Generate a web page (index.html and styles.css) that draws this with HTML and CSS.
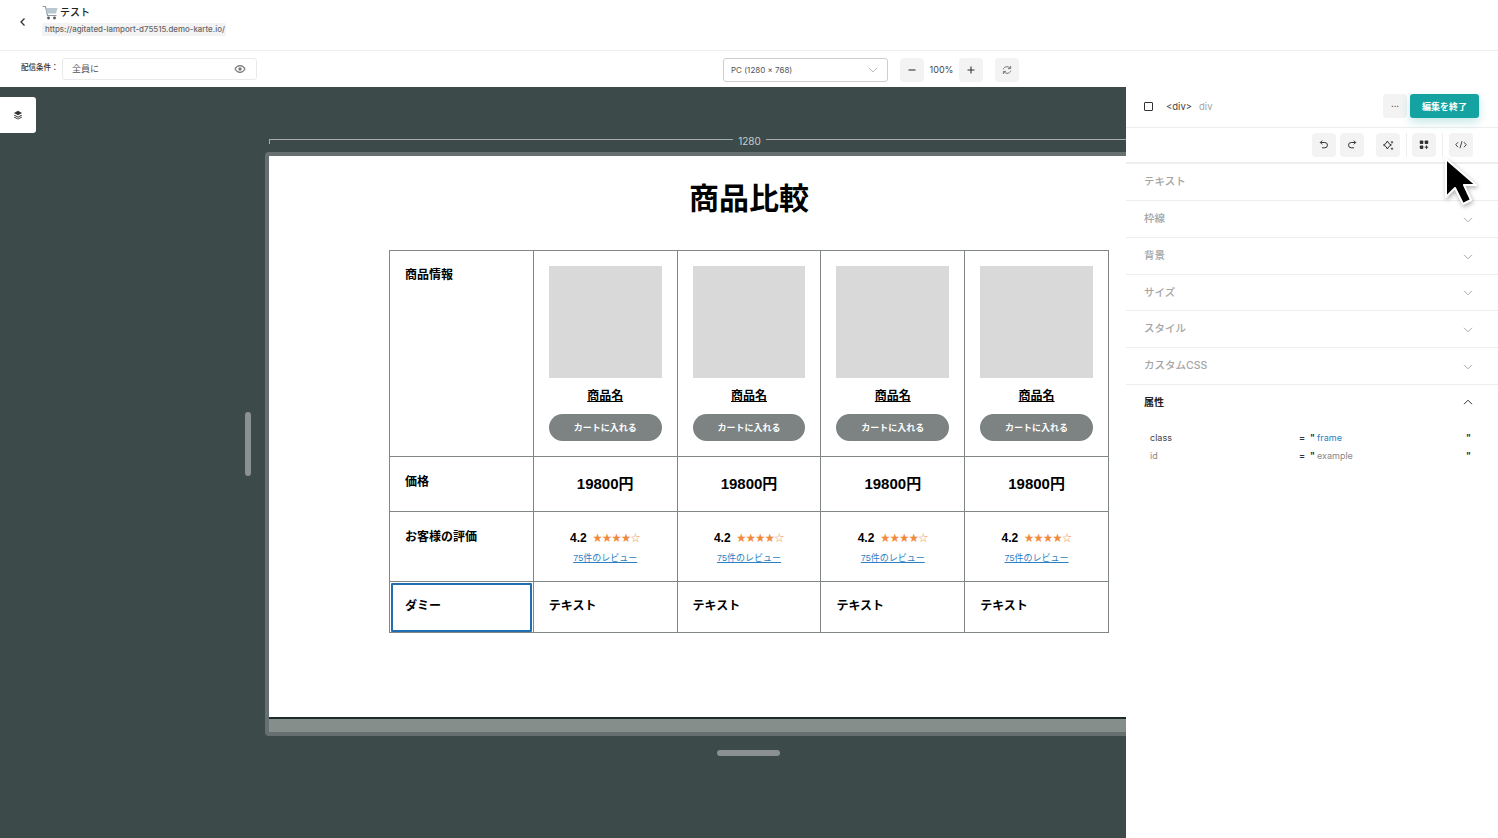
FILE: index.html
```html
<!DOCTYPE html>
<html lang="ja">
<head>
  <meta charset="UTF-8">
  <meta name="viewport" content="width=device-width, initial-scale=1.0">
  <title>テスト</title>
  <link rel="stylesheet" href="styles.css">
</head>
<body>
<header class="top-bar">
  <button class="back-button" aria-label="戻る">
    <svg width="10" height="10" viewBox="0 0 10 10"><path d="M6.500 1.500 3 5l3.500 3.500" fill="none" stroke="#333" stroke-width="1.300"/></svg>
  </button>
  <div class="page-info">
    <div class="page-title">
      <svg class="cart-icon" width="16" height="15" viewBox="0 0 16 15">
        <path d="M.5 1.500h3l2 9h9" fill="none" stroke="#8f9aa3" stroke-width="1.200"/>
        <path d="M3.800 3H15.500l-1.500 5.500H5z" fill="#b9c7cf"/>
        <circle cx="6.500" cy="13" r="1.400" fill="#555"/>
        <circle cx="12.500" cy="13" r="1.400" fill="#555"/>
      </svg>
      <span>テスト</span>
    </div>
    <div class="page-url">https://agitated-lamport-d75515.demo-karte.io/</div>
  </div>
</header>

<div class="tool-bar">
  <div class="audience">
    <span class="audience-label">配信条件：</span>
    <div class="audience-box">
      <span>全員に</span>
      <svg width="12" height="12" viewBox="0 0 12 12">
        <path d="M1 6c1.300-2.300 3-3.400 5-3.400S9.700 3.700 11 6c-1.300 2.300-3 3.400-5 3.400S2.300 8.300 1 6z" fill="none" stroke="#777" stroke-width="1.100"/>
        <circle cx="6" cy="6" r="1.700" fill="#777"/>
      </svg>
    </div>
  </div>
  <div class="view-controls">
    <div class="device-select">
      <span>PC (1280 × 768)</span>
      <svg width="10" height="6" viewBox="0 0 10 6"><path d="M.8 .8 5 5 9.200 .8" fill="none" stroke="#bbb" stroke-width="1"/></svg>
    </div>
    <button class="square-button zoom-out">
      <svg width="10" height="10" viewBox="0 0 10 10"><path d="M1.500 5h7" stroke="#333" stroke-width="1.100"/></svg>
    </button>
    <span class="zoom-value">100%</span>
    <button class="square-button zoom-in">
      <svg width="10" height="10" viewBox="0 0 10 10"><path d="M1.500 5h7M5 1.500v7" stroke="#333" stroke-width="1.100"/></svg>
    </button>
    <button class="square-button refresh">
      <svg width="10" height="10" viewBox="0 0 10 10"><path d="M1.300 4.300C1.800 2.600 3.200 1.700 5 1.700c1.200 0 2.200.5 3 1.400M8.700 5.700C8.200 7.400 6.800 8.300 5 8.300c-1.200 0-2.200-.5-3-1.400" fill="none" stroke="#777" stroke-width="1"/><path d="M8.600 1v2.600H6M1.400 9V6.400H4" fill="none" stroke="#777" stroke-width="1"/></svg>
    </button>
  </div>
</div>

<main class="workspace">
  <section class="canvas">
    <button class="layers-tab" aria-label="レイヤー">
      <svg width="10" height="10" viewBox="0 0 10 10"><path d="M5 .8 9 3 5 5.200 1 3z" fill="#333"/><path d="M1.500 4.800 5 6.700l3.500-1.900L9 5.500 5 7.700 1 5.500z" fill="#333"/><path d="M1.500 6.800 5 8.700l3.500-1.900.5.700-4 2-4-2z" fill="#333"/></svg>
    </button>

    <div class="ruler">
      <span class="ruler-line"></span>
      <span class="ruler-label">1280</span>
      <span class="ruler-line"></span>
    </div>

    <div class="device-row">
      <span class="side-handle"></span>
      <div class="device-frame">
        <div class="device-screen">
          <div class="page">
            <h1 class="page-heading">商品比較</h1>
            <table class="compare">
              <tr class="row-product">
                <th>商品情報</th>
                <td>
                  <div class="thumb"></div>
                  <a class="product-name">商品名</a>
                  <div class="cart-button">カートに入れる</div>
                </td>
                <td>
                  <div class="thumb"></div>
                  <a class="product-name">商品名</a>
                  <div class="cart-button">カートに入れる</div>
                </td>
                <td>
                  <div class="thumb"></div>
                  <a class="product-name">商品名</a>
                  <div class="cart-button">カートに入れる</div>
                </td>
                <td>
                  <div class="thumb"></div>
                  <a class="product-name">商品名</a>
                  <div class="cart-button">カートに入れる</div>
                </td>
              </tr>
              <tr class="row-price">
                <th>価格</th>
                <td>19800円</td>
                <td>19800円</td>
                <td>19800円</td>
                <td>19800円</td>
              </tr>
              <tr class="row-rating">
                <th>お客様の評価</th>
                <td>
                  <div class="score"><b>4.2</b><span class="stars">★★★★☆</span></div>
                  <a class="reviews">75件のレビュー</a>
                </td>
                <td>
                  <div class="score"><b>4.2</b><span class="stars">★★★★☆</span></div>
                  <a class="reviews">75件のレビュー</a>
                </td>
                <td>
                  <div class="score"><b>4.2</b><span class="stars">★★★★☆</span></div>
                  <a class="reviews">75件のレビュー</a>
                </td>
                <td>
                  <div class="score"><b>4.2</b><span class="stars">★★★★☆</span></div>
                  <a class="reviews">75件のレビュー</a>
                </td>
              </tr>
              <tr class="row-dummy">
                <th class="selected">ダミー</th>
                <td>テキスト</td>
                <td>テキスト</td>
                <td>テキスト</td>
                <td>テキスト</td>
              </tr>
            </table>
          </div>
        </div>
      </div>
    </div>
    <div class="bottom-handle"></div>
  </section>

  <aside class="panel">
    <div class="panel-head">
      <span class="element-box"></span>
      <span class="element-tag">&lt;div&gt;</span>
      <span class="element-name">div</span>
      <button class="square-button more">···</button>
      <button class="finish-button">編集を終了</button>
    </div>
    <div class="panel-tools">
      <button class="square-button">
        <svg width="10" height="10" viewBox="0 0 10 10"><path d="M3.200 .6 1.300 2.500l1.900 1.900" fill="none" stroke="#333" stroke-width="1"/><path d="M1.500 2.500h4.300a2.600 2.600 0 0 1 0 5.300H3" fill="none" stroke="#333" stroke-width="1"/></svg>
      </button>
      <button class="square-button">
        <svg width="10" height="10" viewBox="0 0 10 10"><path d="M6.800 .6l1.900 1.900-1.900 1.900" fill="none" stroke="#333" stroke-width="1"/><path d="M8.500 2.500H4.200a2.600 2.600 0 0 0 0 5.300H7" fill="none" stroke="#333" stroke-width="1"/></svg>
      </button>
      <button class="square-button spark">
        <svg width="11" height="11" viewBox="0 0 11 11"><path d="M4 2.500 5.500 5 8 6.500 5.500 8 4 10.500 2.500 8 0 6.500 2.500 5z" fill="none" stroke="#333" stroke-width="1" transform="translate(.4 -1.500)"/><path d="M9 1v2.500M7.800 2.200h2.400M9 7.500v2.500M7.800 8.700h2.400" stroke="#333" stroke-width=".8"/></svg>
      </button>
      <span class="tool-divider narrow"></span>
      <button class="square-button">
        <svg width="10" height="10" viewBox="0 0 10 10"><rect x=".8" y=".5" width="3.500" height="3.500" rx=".8" fill="#333"/><rect x="5.700" y=".5" width="3.500" height="3.500" rx=".8" fill="#333"/><rect x=".8" y="5.400" width="3.500" height="3.500" rx=".8" fill="#333"/><path d="M7.500 5.400v3.500M5.700 7.200h3.500" stroke="#333" stroke-width="1"/></svg>
      </button>
      <span class="tool-divider"></span>
      <button class="square-button">
        <svg width="12" height="10" viewBox="0 0 12 10"><path d="M3 2.200.8 4.700 3 7.200M9 2.200 11.200 4.700 9 7.200M7 1.200 5 8.200" fill="none" stroke="#333" stroke-width=".9"/></svg>
      </button>
    </div>

    <div class="section"><span>テキスト</span></div>
    <div class="section"><span>枠線</span><svg class="chevron" width="10" height="6" viewBox="0 0 10 6"><path d="M1 .8 5 4.800 9 .8" fill="none" stroke="#aaa" stroke-width="1"/></svg></div>
    <div class="section"><span>背景</span><svg class="chevron" width="10" height="6" viewBox="0 0 10 6"><path d="M1 .8 5 4.800 9 .8" fill="none" stroke="#aaa" stroke-width="1"/></svg></div>
    <div class="section short"><span>サイズ</span><svg class="chevron" width="10" height="6" viewBox="0 0 10 6"><path d="M1 .8 5 4.800 9 .8" fill="none" stroke="#aaa" stroke-width="1"/></svg></div>
    <div class="section"><span>スタイル</span><svg class="chevron" width="10" height="6" viewBox="0 0 10 6"><path d="M1 .8 5 4.800 9 .8" fill="none" stroke="#aaa" stroke-width="1"/></svg></div>
    <div class="section"><span>カスタムCSS</span><svg class="chevron" width="10" height="6" viewBox="0 0 10 6"><path d="M1 .8 5 4.800 9 .8" fill="none" stroke="#aaa" stroke-width="1"/></svg></div>
    <div class="section open"><span>属性</span><svg class="chevron" width="10" height="6" viewBox="0 0 10 6"><path d="M1 5.200 5 1.200 9 5.200" fill="none" stroke="#333" stroke-width="1"/></svg></div>

    <div class="attrs">
      <div class="attr">
        <span class="attr-name">class</span>
        <span class="attr-eq">=</span>
        <span class="attr-quote">"</span>
        <span class="attr-value link">frame</span>
        <span class="attr-quote">"</span>
      </div>
      <div class="attr muted">
        <span class="attr-name">id</span>
        <span class="attr-eq">=</span>
        <span class="attr-quote">"</span>
        <span class="attr-value">example</span>
        <span class="attr-quote">"</span>
      </div>
    </div>
  </aside>
</main>

<svg class="cursor" width="40" height="54" viewBox="0 0 40 54">
  <path d="M4 2v38l9-9 8 16 8-4-7-15h12z" fill="#000" stroke="#fff" stroke-width="2" stroke-linejoin="round"/>
</svg>
</body>
</html>
```

FILE: styles.css
```css
* {
  box-sizing: border-box;
  margin: 0;
  padding: 0;
}

:root {
  --canvas: #3c4b4a;
  --line: #eeeeee;
  --button: #f3f3f3;
  --muted: #a5a5a5;
  --teal: #14a3a0;
  --table-line: #808585;
  --ui-font: Inter, "Noto Sans CJK JP", sans-serif;
  --page-font: "Liberation Sans", "Noto Sans CJK JP", sans-serif;
}

html, body {
  width: 1498px;
  height: 838px;
  overflow: hidden;
}

body {
  font-family: var(--ui-font);
  background-color: #fff;
  color: #333;
  position: relative;
  display: flex;
  flex-direction: column;
}

button {
  border: none;
  font-family: inherit;
  cursor: pointer;
}

/* Header */
.top-bar {
  height: 51px;
  flex: none;
  display: flex;
  align-items: center;
  padding: 0 0 10px 18px;
  border-bottom: 1px solid var(--line);
}

.back-button {
  width: 10px;
  height: 10px;
  margin-top: 4px;
  display: flex;
  background: none;
}

.page-info {
  margin-left: 14px;
}

.page-title {
  display: flex;
  align-items: center;
  gap: 2px;
  font-size: 10px;
  font-weight: 500;
  line-height: 14px;
  color: #222;
}

.page-url {
  width: 184px;
  margin-top: 3px;
  height: 13px;
  padding: 0 3px;
  font-size: 7.900px;
  font-weight: 500;
  line-height: 12px;
  white-space: nowrap;
  color: #666;
  background-color: var(--button);
  border-radius: 2px;
}

/* Toolbar */
.tool-bar {
  height: 36px;
  flex: none;
  position: relative;
  display: flex;
  align-items: center;
  padding-left: 21px;
}

.audience {
  display: flex;
  align-items: center;
}

.audience-label {
  width: 41px;
  margin-top: -5px;
  font-size: 7.500px;
  font-weight: 500;
  white-space: nowrap;
}

.audience-box {
  width: 195px;
  height: 22px;
  margin-top: -1px;
  display: flex;
  align-items: center;
  justify-content: space-between;
  padding: 0 10px 0 9px;
  font-size: 9px;
  color: #555;
  border: 1px solid #eaeaea;
  border-radius: 3px;
}

.view-controls {
  display: flex;
  align-items: center;
  margin-left: 466px;
  margin-top: 1px;
}

.device-select {
  width: 165px;
  height: 24px;
  display: flex;
  align-items: center;
  justify-content: space-between;
  padding: 0 9px 0 7px;
  font-size: 8px;
  color: #555;
  border: 1px solid #cdcdcd;
  border-radius: 3px;
}

.square-button {
  width: 24px;
  height: 24px;
  flex: none;
  display: flex;
  align-items: center;
  justify-content: center;
  background-color: var(--button);
  border-radius: 4px;
}

.zoom-out {
  margin-left: 12px;
}

.zoom-value {
  width: 35px;
  text-align: center;
  font-size: 9px;
  color: #444;
}

.refresh {
  margin-left: 12px;
}

/* Canvas */
.workspace {
  flex: 1;
  display: flex;
  min-height: 0;
}

.canvas {
  flex: 1;
  min-width: 0;
  position: relative;
  overflow: hidden;
  background-color: var(--canvas);
  padding-top: 45px;
}

.layers-tab {
  position: absolute;
  left: 0;
  top: 10px;
  width: 36px;
  height: 36px;
  display: flex;
  align-items: center;
  justify-content: center;
  background-color: #fff;
  border-radius: 0 3px 3px 0;
}

.ruler {
  width: 960px;
  height: 14px;
  margin-left: 269px;
  display: flex;
  align-items: center;
  gap: 5px;
}

.ruler-line {
  flex: 1;
  height: 5px;
  margin-top: 5px;
  border-top: 1px solid #a7adad;
}

.ruler-line:first-child {
  border-left: 1px solid #a7adad;
}

.ruler-label {
  font-size: 10px;
  line-height: 14px;
  color: #c9cdcd;
  margin-top: 3px;
}

.device-row {
  margin-top: 6px;
  margin-left: 245px;
  display: flex;
  align-items: center;
  gap: 14px;
}

.side-handle {
  width: 6px;
  height: 64px;
  flex: none;
  background-color: #8b9191;
  border-radius: 3px;
}

.device-frame {
  width: 1300px;
  height: 584px;
  flex: none;
  padding: 4px;
  background-color: #667070;
  border-radius: 4px;
}

.device-screen {
  height: 576px;
  background-color: #868e8b;
}

.page {
  width: 1280px;
  height: 563px;
  padding-top: 21px;
  background-color: #fff;
  border-bottom: 2px solid #1c2a2a;
  font-family: var(--page-font);
  color: #000;
}

.page-heading {
  width: 960px;
  text-align: center;
  font-size: 30px;
  font-weight: 700;
  line-height: 44px;
  margin-bottom: 29px;
}

.compare {
  width: 720px;
  margin-left: 120px;
  border-collapse: collapse;
  table-layout: fixed;
}

.compare th, .compare td {
  border: 1px solid var(--table-line);
  padding: 15px;
  vertical-align: top;
  text-align: center;
  font-size: 12px;
}

.compare th {
  text-align: left;
  font-weight: 700;
  line-height: 18px;
}

.thumb {
  height: 112px;
  background-color: #d9d9d9;
}

.product-name {
  display: block;
  margin-top: 9px;
  line-height: 18px;
  font-weight: 700;
  text-decoration: underline;
}

.cart-button {
  height: 27px;
  margin-top: 9px;
  font-size: 9px;
  font-weight: 700;
  line-height: 28px;
  color: #fff;
  background-color: #7d8382;
  border-radius: 14px;
}

.row-product {
  height: 206px;
}

.row-price {
  height: 55px;
}

.compare .row-price th, .compare .row-rating th {
  padding-top: 16px;
}

.compare .row-price td {
  font-size: 15px;
  font-weight: 700;
  line-height: 24px;
}

.row-rating {
  height: 70px;
}

.compare .row-rating td {
  padding-top: 18px;
}

.score {
  display: flex;
  align-items: center;
  justify-content: center;
  gap: 6px;
  font-size: 12px;
  line-height: 16px;
}

.stars {
  font-size: 9.500px;
  color: #f08a3c;
}

.reviews {
  display: block;
  margin-top: 6px;
  font-size: 9px;
  line-height: 12px;
  color: #2b7fc4;
  text-decoration: underline;
}

.compare .row-dummy td {
  text-align: left;
  font-weight: 700;
  height: 51px;
  line-height: 18px;
}

.compare .selected {
  position: relative;
  outline: 2.500px solid #1f6fb2;
  outline-offset: -3px;
  border-radius: 2px;
  box-shadow: 0 4px 6px rgba(0, 0, 0, 0.22);
}

.bottom-handle {
  width: 63px;
  height: 6px;
  margin: 14px 0 0 717px;
  background-color: #8b9191;
  border-radius: 3px;
}

/* Side panel */
.panel {
  width: 372px;
  flex: none;
  background-color: #fff;
  font-size: 10px;
  display: flex;
  flex-direction: column;
}

.panel-head {
  height: 41px;
  flex: none;
  display: flex;
  align-items: center;
  padding: 0 19px 2px 18px;
  border-bottom: 1px solid var(--line);
}

.element-box {
  width: 9px;
  height: 9px;
  border: 1.500px solid #333;
  border-radius: 1px;
}

.element-tag {
  margin-left: 13px;
  font-size: 9.500px;
  color: #444;
}

.element-name {
  margin-left: 7px;
  font-size: 9.500px;
  color: var(--muted);
  flex: 1;
}

.more {
  font-size: 8px;
  font-weight: 700;
  color: #444;
}

.finish-button {
  width: 69px;
  height: 24px;
  margin-left: 3px;
  font-size: 9px;
  font-weight: 700;
  color: #fff;
  background-color: var(--teal);
  border-radius: 3px;
  box-shadow: 0 4px 10px rgba(20, 163, 160, 0.25);
}

.panel-tools {
  height: 36px;
  flex: none;
  display: flex;
  align-items: center;
  justify-content: flex-end;
  padding-right: 25px;
  gap: 4px;
  border-bottom: 2px solid var(--line);
}

.spark {
  margin-left: 8px;
}

.tool-divider {
  width: 1px;
  height: 24px;
  margin: 0 2px;
  background-color: var(--line);
}

.tool-divider.narrow {
  margin: 0 1px 0 2px;
}

.section {
  height: 37px;
  flex: none;
  display: flex;
  align-items: center;
  justify-content: space-between;
  padding: 0 25px 0 18px;
  font-size: 10.500px;
  font-weight: 500;
  color: var(--muted);
  border-bottom: 1px solid var(--line);
}

.section span {
  margin-top: -3px;
}

.section .chevron {
  margin-top: 1px;
}

.section.short {
  height: 36px;
}

.section.open {
  color: #222;
  font-weight: 700;
  font-size: 10px;
  border-bottom: none;
}

.section.open span {
  margin-top: -5px;
}

.section.open .chevron {
  margin-top: -3px;
}

.attrs {
  padding: 7px 25px 0 24px;
  font-size: 9px;
  line-height: 18px;
}

.attr {
  display: flex;
  color: #444;
}

.attr.muted {
  color: #888;
}

.attr-name {
  width: 149px;
}

.attr-eq {
  width: 11px;
  font-weight: 700;
  color: #333;
}

.attr-quote {
  font-weight: 700;
  color: #333;
  width: 7px;
}

.attr-value {
  flex: 1;
}

.attr-value.link {
  color: #2b7fc4;
}

.cursor {
  position: absolute;
  left: 1442px;
  top: 157px;
  filter: drop-shadow(1px 2px 2px rgba(0, 0, 0, 0.3));
}
```
